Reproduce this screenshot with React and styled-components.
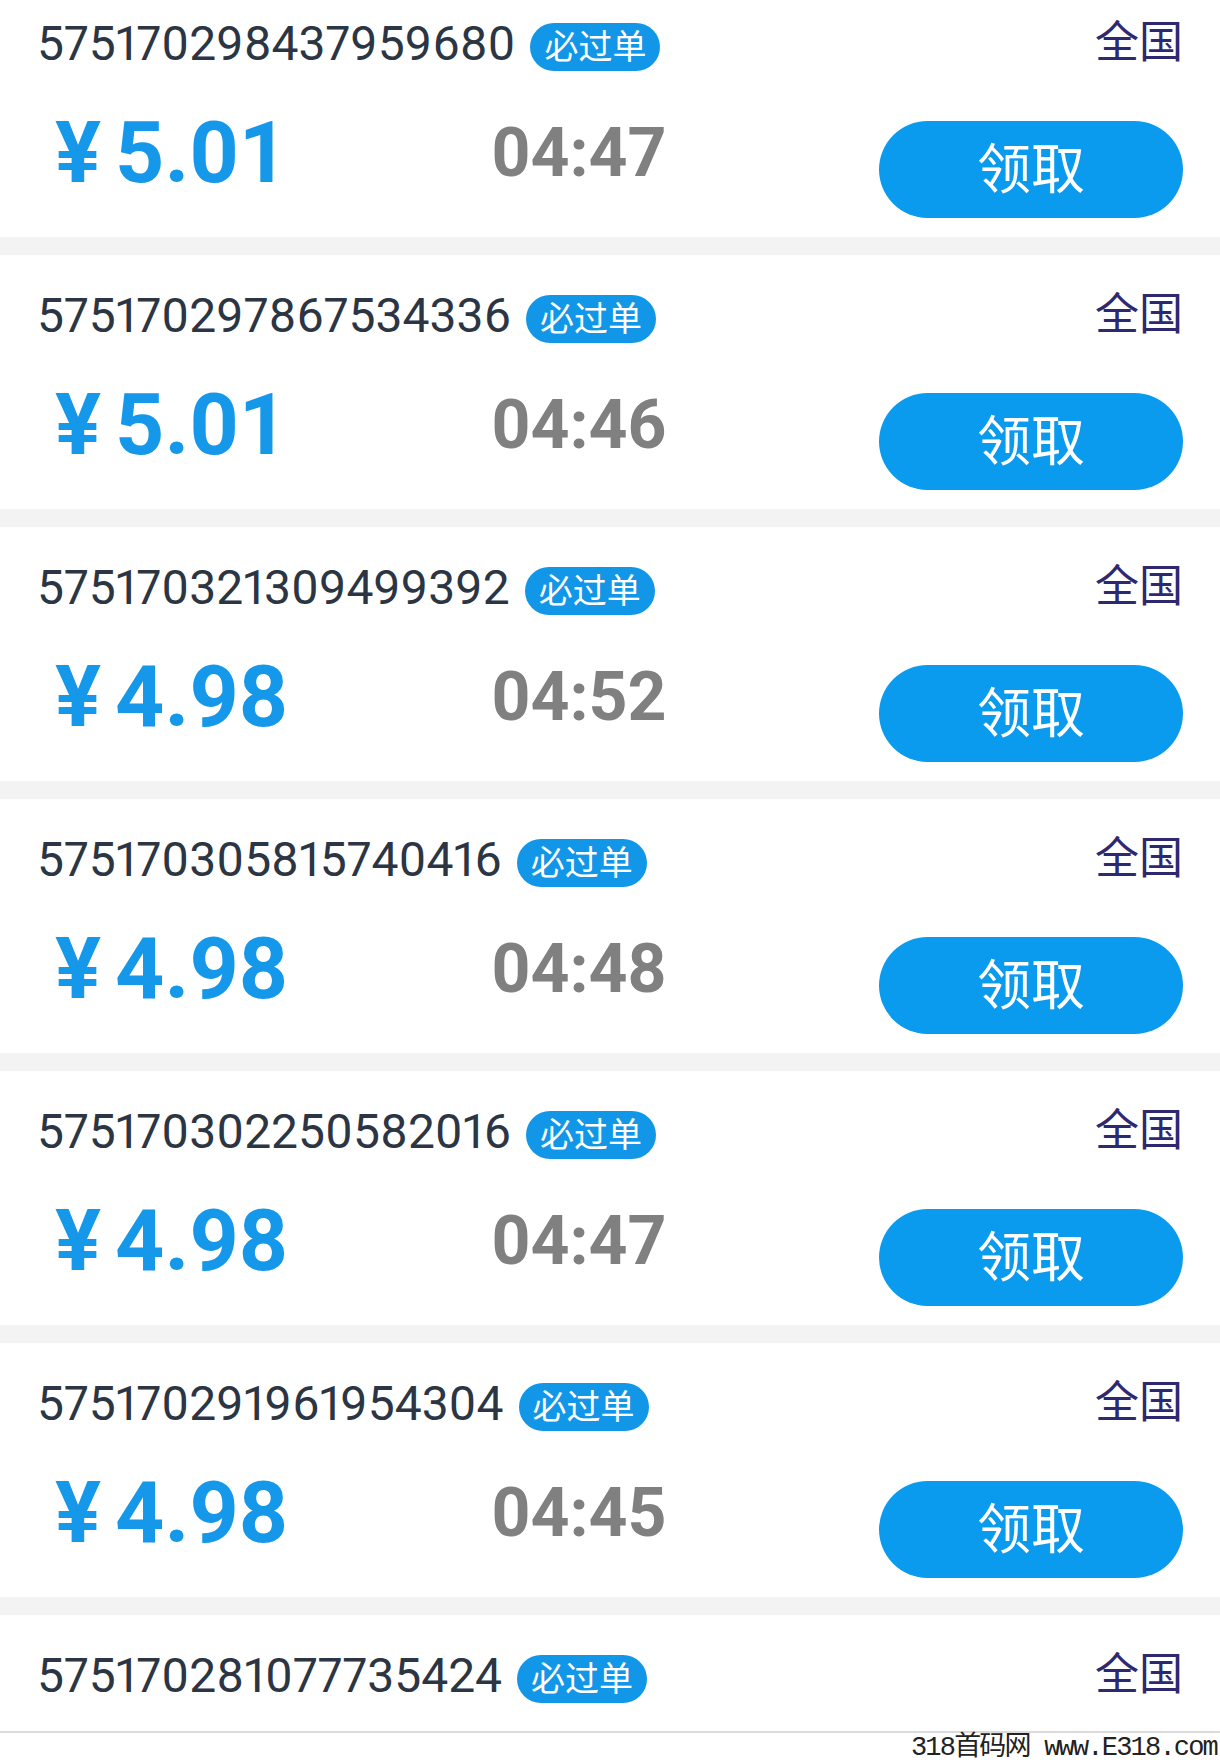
import React from "react";
import styled, { createGlobalStyle } from "styled-components";

const GlobalStyle = createGlobalStyle`
  html, body {
    margin: 0;
    padding: 0;
    background: #fff;
  }
  body {
    font-family: Roboto, "Noto Sans CJK SC", sans-serif;
  }
`;

const Page = styled.div`
  width: 1220px;
  height: 1764px;
  overflow: hidden;
  background: #fff;
`;

// list is scrolled a little, first card is cut at the top
const List = styled.div`
  margin-top: -17px;
  display: flex;
  flex-direction: column;
  gap: 18px;
  background: #f3f3f3;
`;

const Card = styled.div`
  height: ${(p) => (p.$cut ? "116px" : "254px")};
  box-sizing: border-box;
  padding: 40px 37px 0 37px;
  background: #fff;
  overflow: hidden;
`;

const TopRow = styled.div`
  display: flex;
  align-items: center;
  height: 48px;
`;

const OrderId = styled.span`
  font-family: Roboto, sans-serif;
  font-size: 48px;
  font-weight: 400;
  font-variant-numeric: proportional-nums;
  line-height: 48px;
  color: #2b3543;
  margin-bottom: 7px;
`;

const Badge = styled.span`
  display: flex;
  align-items: center;
  box-sizing: border-box;
  height: 48px;
  margin-left: 15px;
  padding: 0 14px 4px;
  border-radius: 24px;
  background: #1296e8;
  color: #fff;
  font-family: "Noto Sans CJK SC", sans-serif;
  font-size: 34px;
  line-height: 44px;
`;

const Region = styled.span`
  margin-left: auto;
  margin-bottom: 16px;
  font-family: "Noto Sans CJK SC", sans-serif;
  font-size: 44px;
  line-height: 48px;
  color: #2d2870;
`;

const BottomRow = styled.div`
  display: flex;
  align-items: flex-start;
  height: 97px;
  margin-top: 50px;
`;

const Price = styled.div`
  width: 382px;
  box-sizing: border-box;
  padding-left: 18px;
  display: flex;
  align-items: baseline;
  font-family: Roboto, sans-serif;
  font-size: 86px;
  font-weight: 700;
  line-height: 64px;
  color: #1598ea;
`;

const Yen = styled.span`
  margin-right: 14px;
`;

const Countdown = styled.div`
  width: 320px;
  text-align: center;
  font-family: Roboto, sans-serif;
  font-size: 68px;
  font-weight: 700;
  line-height: 64px;
  color: #808080;
`;

const ClaimButton = styled.button`
  margin-left: auto;
  width: 304px;
  height: 97px;
  box-sizing: border-box;
  border: none;
  border-radius: 49px;
  background: #0a9bef;
  color: #fff;
  font-family: "Noto Sans CJK SC", sans-serif;
  font-size: 54px;
  line-height: 1;
  display: flex;
  align-items: center;
  justify-content: center;
  padding: 0 0 8px;
`;

const Footer = styled.div`
  height: 31px;
  border-top: 2px solid #dadada;
  display: flex;
  align-items: center;
  justify-content: flex-end;
  padding-right: 3px;
  font-family: "Liberation Mono", "Noto Sans CJK SC", monospace;
  font-size: 27px;
  line-height: 31px;
  letter-spacing: -1.8px;
  color: #222;
`;

const orders = [
  { id: "575170298437959680", price: "5.01", time: "04:47" },
  { id: "575170297867534336", price: "5.01", time: "04:46" },
  { id: "575170321309499392", price: "4.98", time: "04:52" },
  { id: "575170305815740416", price: "4.98", time: "04:48" },
  { id: "575170302250582016", price: "4.98", time: "04:47" },
  { id: "575170291961954304", price: "4.98", time: "04:45" },
  { id: "575170281077735424", cut: true },
];

function OrderCard({ order }) {
  return (
    <Card $cut={order.cut}>
      <TopRow>
        <OrderId>{order.id}</OrderId>
        <Badge>必过单</Badge>
        <Region>全国</Region>
      </TopRow>
      {!order.cut && (
        <BottomRow>
          <Price>
            <Yen>¥</Yen>
            {order.price}
          </Price>
          <Countdown>{order.time}</Countdown>
          <ClaimButton>领取</ClaimButton>
        </BottomRow>
      )}
    </Card>
  );
}

export default function App() {
  return (
    <Page>
      <GlobalStyle />
      <List>
        {orders.map((o) => (
          <OrderCard key={o.id} order={o} />
        ))}
      </List>
      <Footer>318首码网 www.E318.com</Footer>
    </Page>
  );
}
